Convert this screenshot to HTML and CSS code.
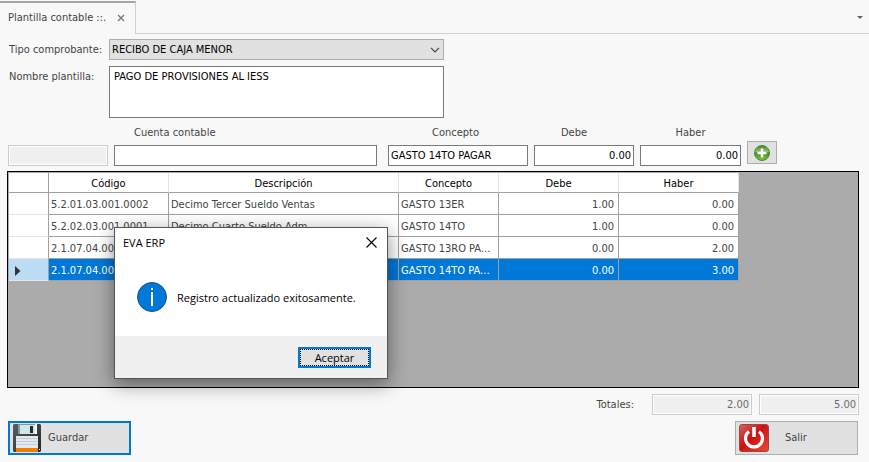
FILE: index.html
```html
<!DOCTYPE html>
<html lang="es">
<head>
    <meta charset="UTF-8">
    <meta name="viewport" content="width=device-width, initial-scale=1.0">
    <title>EVA ERP - Plantilla contable</title>
    <link rel="stylesheet" href="styles.css">
</head>
<body>
    <nav class="tab-bar">
        <div class="tab">
            <a href="#plantilla" class="tab-link">Plantilla contable ::.</a>
            <button type="button" class="tab-close" aria-label="Cerrar">
                <svg width="8" height="8" viewBox="0 0 8 8"><path d="M1 1l6 6M7 1L1 7" stroke="#777" stroke-width="1.3" fill="none"/></svg>
            </button>
        </div>
        <div class="tab-rest">
            <button type="button" class="tab-menu" aria-label="Ventanas">
                <svg width="6" height="3" viewBox="0 0 6 3"><path d="M0 0h6L3 3z" fill="#666"/></svg>
            </button>
        </div>
    </nav>

    <main class="content" id="plantilla">
        <div class="form-header">
            <label for="tipo">Tipo comprobante:</label>
            <div class="select-wrap">
                <select id="tipo">
                    <option>RECIBO DE CAJA MENOR</option>
                </select>
                <svg class="select-arrow" width="10" height="6" viewBox="0 0 10 6"><path d="M1 .8l4 4 4-4" stroke="#444" stroke-width="1.2" fill="none"/></svg>
            </div>
            <label for="nombre" class="label-top">Nombre plantilla:</label>
            <textarea id="nombre">PAGO DE PROVISIONES AL IESS</textarea>
        </div>

        <div class="entry">
            <div class="entry-field">
                <input type="text" aria-label="Código de cuenta" disabled>
            </div>
            <div class="entry-field">
                <label for="cuenta" class="label-cuenta">Cuenta contable</label>
                <input type="text" id="cuenta">
            </div>
            <div class="entry-field entry-concepto">
                <label for="concepto" class="label-concepto">Concepto</label>
                <input type="text" id="concepto" value="GASTO 14TO PAGAR">
            </div>
            <div class="entry-field">
                <label for="debe" class="label-debe">Debe</label>
                <input type="text" id="debe" class="number" value="0.00">
            </div>
            <div class="entry-field">
                <label for="haber">Haber</label>
                <input type="text" id="haber" class="number" value="0.00">
            </div>
            <button type="button" class="btn-add" aria-label="Agregar">
                <svg width="16" height="16" viewBox="0 0 16 16">
                    <defs>
                        <linearGradient id="green" x1="0" y1="0" x2="0" y2="1">
                            <stop offset="0" stop-color="#3f8a2a"/>
                            <stop offset=".4" stop-color="#8cc070"/>
                            <stop offset=".5" stop-color="#3f9420"/>
                            <stop offset="1" stop-color="#7cc544"/>
                        </linearGradient>
                    </defs>
                    <circle cx="8" cy="8" r="7.5" fill="url(#green)" stroke="#46892b"/>
                    <path d="M8 3.5v9M3.5 8h9" stroke="#fff" stroke-width="2.6"/>
                </svg>
            </button>
        </div>

        <div class="grid">
            <table>
                <colgroup>
                    <col class="col-mark">
                    <col class="col-codigo">
                    <col class="col-descripcion">
                    <col class="col-concepto">
                    <col class="col-valor">
                    <col class="col-valor">
                </colgroup>
                <thead>
                    <tr><th></th><th>Código</th><th>Descripción</th><th>Concepto</th><th>Debe</th><th>Haber</th></tr>
                </thead>
                <tbody>
                    <tr>
                        <td class="mark"></td>
                        <td>5.2.01.03.001.0002</td>
                        <td>Decimo Tercer Sueldo Ventas</td>
                        <td>GASTO 13ER</td>
                        <td class="number">1.00</td>
                        <td class="number">0.00</td>
                    </tr>
                    <tr>
                        <td class="mark"></td>
                        <td>5.2.02.03.001.0001</td>
                        <td>Decimo Cuarto Sueldo Adm</td>
                        <td>GASTO 14TO</td>
                        <td class="number">1.00</td>
                        <td class="number">0.00</td>
                    </tr>
                    <tr>
                        <td class="mark"></td>
                        <td>2.1.07.04.00</td>
                        <td></td>
                        <td>GASTO 13RO PA...</td>
                        <td class="number">0.00</td>
                        <td class="number">2.00</td>
                    </tr>
                    <tr class="selected">
                        <td class="mark"><svg width="6" height="10" viewBox="0 0 6 10"><path d="M0 0l5.5 5L0 10z" fill="#333"/></svg></td>
                        <td>2.1.07.04.00</td>
                        <td></td>
                        <td>GASTO 14TO PA...</td>
                        <td class="number">0.00</td>
                        <td class="number">3.00</td>
                    </tr>
                </tbody>
            </table>
        </div>

        <div class="totals">
            <label for="totalDebe">Totales:</label>
            <input type="text" id="totalDebe" class="number" value="2.00" disabled>
            <input type="text" class="number" aria-label="Total haber" value="5.00" disabled>
        </div>

        <div class="actions">
            <button type="button" class="btn btn-save">
                <svg width="28" height="28" viewBox="0 0 28 28">
                    <defs>
                        <linearGradient id="disk" x1="0" y1="0" x2="1" y2="1">
                            <stop offset="0" stop-color="#5a5d62"/>
                            <stop offset="1" stop-color="#22252a"/>
                        </linearGradient>
                    </defs>
                    <path d="M1 0h26l1 1v26l-1 1H1l-1-1V1z" fill="url(#disk)"/>
                    <path d="M5 0h17v10H5z" fill="#8d9496"/>
                    <path d="M7 1h15v9H7z" fill="#cde8e6"/>
                    <path d="M22 0h2v10h-2z" fill="#f2f6f6"/>
                    <path d="M17 2h3v7h-3z" fill="#26292c"/>
                    <path d="M3 12h22v12H3z" fill="#dcebfa"/>
                    <path d="M3 14.5h22M3 17.5h22M3 20.5h22" stroke="#d8c8bb"/>
                    <path d="M3 24h22v4H3z" fill="#ee7d00"/>
                    <path d="M26 25h1v1h-1z" fill="#fff"/>
                </svg>
                Guardar
            </button>
            <button type="button" class="btn btn-exit">
                <svg width="30" height="28" viewBox="0 0 30 28">
                    <defs>
                        <linearGradient id="red" x1="0" y1="0" x2="1" y2="1">
                            <stop offset="0" stop-color="#cf6a64"/>
                            <stop offset=".45" stop-color="#cc1010"/>
                            <stop offset="1" stop-color="#f04a35"/>
                        </linearGradient>
                    </defs>
                    <rect x=".5" y=".5" width="29" height="27" rx="2.5" fill="url(#red)" stroke="#a8423c"/>
                    <path d="M10 7.5a8.5 8.5 0 1 0 10 0" fill="none" stroke="#fff" stroke-width="3.2"/>
                    <path d="M15 3v10" stroke="#fff" stroke-width="3.6"/>
                </svg>
                Salir
            </button>
        </div>
    </main>

    <dialog class="message" aria-labelledby="messageTitle" open>
        <div class="message-title">
            <span id="messageTitle">EVA ERP</span>
            <button type="button" class="message-close" aria-label="Cerrar">
                <svg width="11" height="11" viewBox="0 0 11 11"><path d="M.5.5l10 10M10.5.5l-10 10" stroke="#000" stroke-width="1.1" fill="none"/></svg>
            </button>
        </div>
        <div class="message-body">
            <svg width="30" height="30" viewBox="0 0 30 30">
                <circle cx="15" cy="15" r="14.5" fill="#0078d7" stroke="#10538a"/>
                <path d="M14 6h2v2h-2zM14 10h2v14h-2z" fill="#fff"/>
            </svg>
            <p>Registro actualizado exitosamente.</p>
        </div>
        <div class="message-footer">
            <button type="button" class="btn-accept"><span>Aceptar</span></button>
        </div>
    </dialog>
</body>
</html>
```
FILE: styles.css
```css
* {
    margin: 0;
    padding: 0;
    box-sizing: border-box;
}

body {
    font-family: Tahoma, "DejaVu Sans Condensed", "Noto Sans", sans-serif;
    font-size: 11px;
    line-height: 14px;
    color: #444;
    background: #f8f8f8;
    min-height: 100vh;
    display: flex;
    flex-direction: column;
}

button,
input,
select,
textarea {
    font: inherit;
    color: inherit;
}

svg {
    display: block;
    flex: none;
}

/* Tabs */
.tab-bar {
    display: flex;
    height: 34px;
    padding-top: 1px;
}

.tab {
    display: flex;
    align-items: center;
    gap: 11px;
    width: 136px;
    padding: 0 0 1px 8px;
    border-top: 2px solid #a6a6a6;
    border-right: 1px solid #d0d0d0;
}

.tab-link {
    color: inherit;
    text-decoration: none;
    white-space: nowrap;
}

.tab-close,
.tab-menu,
.message-close {
    background: none;
    border: none;
}

.tab-rest {
    flex: 1;
    display: flex;
    justify-content: flex-end;
    align-items: center;
    padding-right: 6px;
    border-bottom: 1px solid #d0d0d0;
}

/* Form */
.content {
    flex: 1;
    display: flex;
    flex-direction: column;
    padding: 5px 10px 7px 8px;
}

.form-header {
    display: grid;
    grid-template-columns: 100px minmax(0, 335px);
    gap: 6px 1px;
    align-items: center;
}

.form-header label {
    padding-left: 1px;
}

.form-header .label-top {
    align-self: start;
    padding-top: 4px;
}

.select-wrap {
    position: relative;
}

select {
    display: block;
    width: 100%;
    height: 21px;
    padding: 1px 2px 0;
    appearance: none;
    color: #000;
    background: #e1e1e1;
    border: 1px solid #adadad;
    border-radius: 0;
}

.select-arrow {
    position: absolute;
    top: 8px;
    right: 4px;
    pointer-events: none;
}

textarea {
    height: 52px;
    padding: 3px 4px;
    resize: none;
    color: #000;
    background: #fff;
    border: 1px solid #7a7a7a;
}

input {
    width: 100px;
    height: 21px;
    padding: 0 2px;
    color: #000;
    background: #fff;
    border: 1px solid #7a7a7a;
}

input:disabled {
    color: #6d6d6d;
    background: #f0f0f0;
    border-color: #ccc;
    box-shadow: inset 0 0 0 1px #fff;
}

.number {
    text-align: right;
}

.entry {
    display: grid;
    grid-template-columns: 100px minmax(0, 263px) 145px 100px 101px 30px;
    gap: 6px;
    align-items: end;
    margin-top: 8px;
}

.entry-field {
    display: flex;
    flex-direction: column;
    gap: 5px;
    text-align: center;
}

.entry-field input {
    width: 100%;
}

.entry-field .label-cuenta {
    padding-left: 20px;
    text-align: left;
}

.entry-field .label-concepto {
    padding-right: 5px;
}

.entry-field .label-debe {
    padding-right: 20px;
}

.entry-concepto {
    padding-left: 5px;
}

.btn-add {
    display: flex;
    justify-content: center;
    align-items: center;
    height: 23px;
    margin-bottom: 2px;
    background: #e1e1e1;
    border: 1px solid #adadad;
}

/* Data grid */
.grid {
    flex: 1;
    margin: 5px 0 6px -1px;
    padding: 1px 0 0 1px;
    background: #ababab;
    border: 1px solid #000;
    overflow: hidden;
}

table {
    width: 730px;
    table-layout: fixed;
    border-spacing: 0;
    background: #fff;
}

.col-mark {
    width: 40px;
}

.col-codigo,
.col-valor {
    width: 120px;
}

.col-descripcion {
    width: 230px;
}

.col-concepto {
    width: 100px;
}

th {
    height: 20px;
    padding-top: 2px;
    font-weight: normal;
    color: #000;
    border-right: 1px solid #e5e5e5;
    border-bottom: 1px solid #a0a0a0;
}

th:first-child {
    border-right-color: #a0a0a0;
}

td {
    height: 22px;
    padding: 2px 3px 0 2px;
    border-right: 1px solid #a0a0a0;
    border-bottom: 1px solid #a0a0a0;
    white-space: nowrap;
}

td.mark {
    padding-left: 6px;
    border-bottom-color: #e5e5e5;
}

td.number {
    padding-right: 4px;
}

.selected {
    color: #fff;
    background: #0078d7;
}

.selected .mark {
    background: #bcdcf4;
}

/* Footer */
.totals {
    display: flex;
    justify-content: flex-end;
    align-items: center;
    gap: 7px;
}

.totals label {
    margin-right: 11px;
}

.actions {
    display: flex;
    justify-content: space-between;
    margin-top: 6px;
    padding-right: 1px;
}

.btn {
    display: flex;
    align-items: center;
    width: 123px;
    height: 34px;
    background: #e1e1e1;
    border: 1px solid #adadad;
}

.btn-save {
    gap: 7px;
    padding-left: 3px;
    border: 2px solid #0078d7;
}

.btn-exit {
    gap: 16px;
    padding-left: 3px;
}

/* Message box */
.message {
    position: absolute;
    top: 227px;
    left: 114px;
    width: 274px;
    margin: 0;
    font-family: "Segoe UI", "Open Sans", "Noto Sans", sans-serif;
    color: #000;
    background: #fff;
    border: 1px solid #555;
    box-shadow: 0 5px 18px rgba(0, 0, 0, 0.45);
}

.message-title {
    display: flex;
    justify-content: space-between;
    align-items: center;
    height: 29px;
    padding: 0 10px 0 8px;
}

.message-body {
    display: flex;
    align-items: center;
    gap: 10px;
    height: 79px;
    padding: 0 22px;
}

.message-body p {
    padding-top: 2px;
}

.message-footer {
    display: flex;
    justify-content: flex-end;
    padding: 11px 16px 10px;
    background: #f0f0f0;
}

.btn-accept {
    width: 73px;
    height: 21px;
    background: #e1e1e1;
    border: 2px solid #0078d7;
}

.btn-accept span {
    display: block;
    height: 17px;
    line-height: 15px;
    border: 1px dotted #000;
}
```
